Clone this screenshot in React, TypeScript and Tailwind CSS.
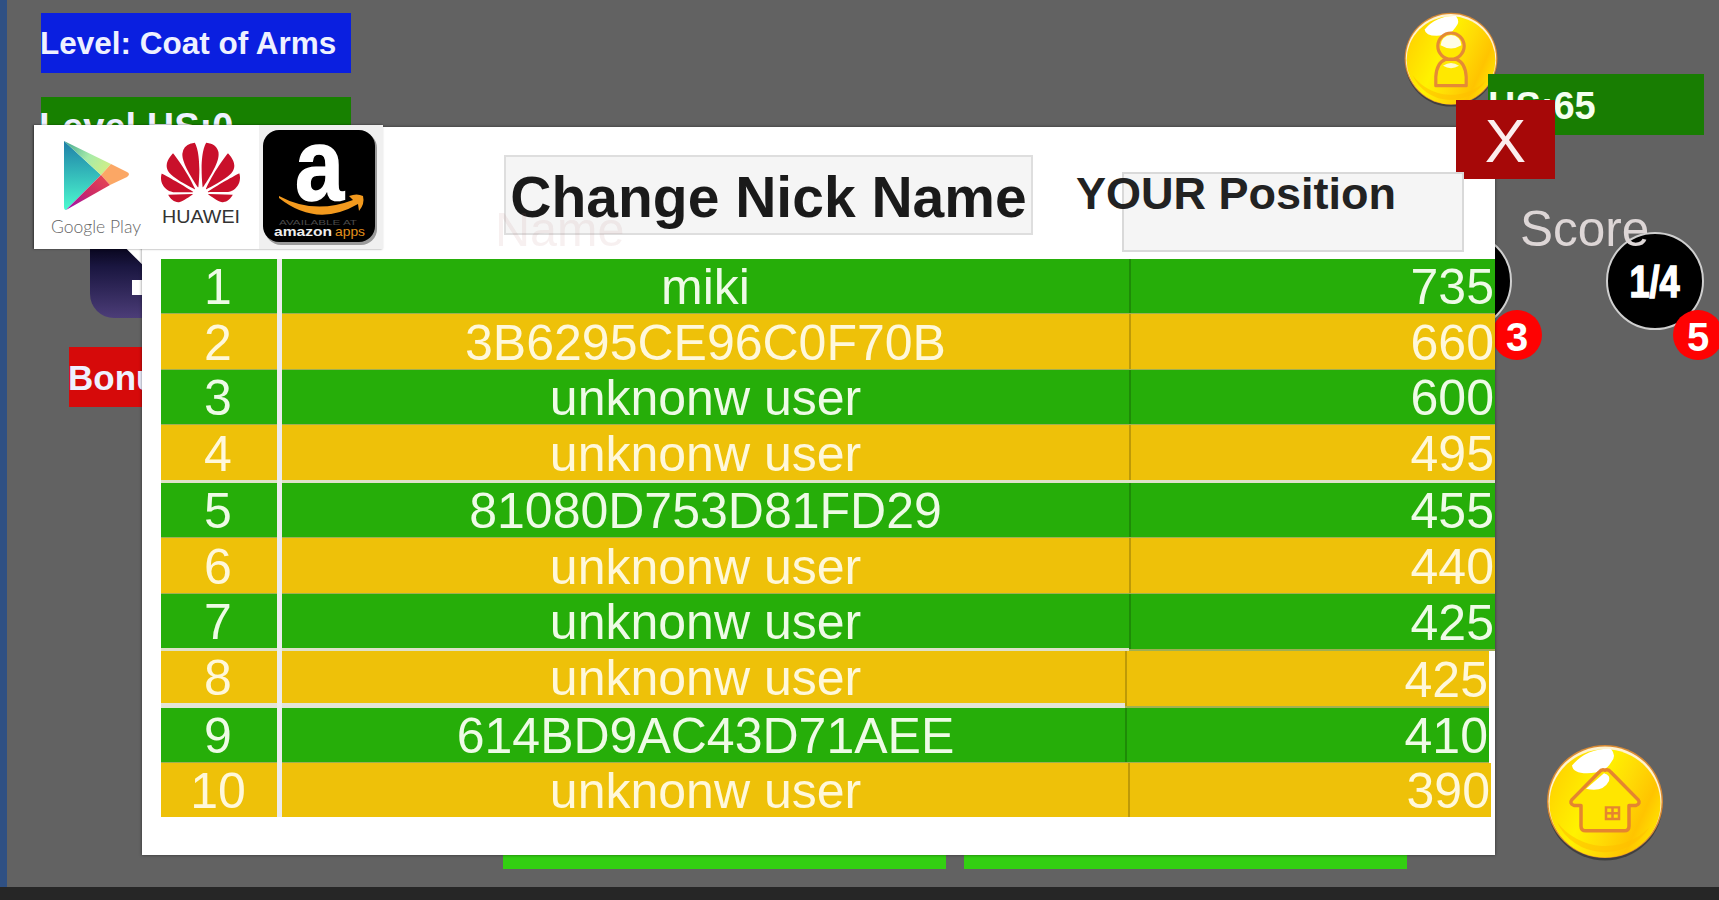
import type { ReactNode } from "react";
import { SiHuawei } from "react-icons/si";

type Row = {
  name: string;
  score: number;
  height: string;
  gap: string;
  scoreGap: string;
  inset: string;
};

const thin = "h-px bg-[#a0b052]";
const wide = "h-[3px] bg-[#dfe2c8]";
const full = "w-[366px]";

const rows: Row[] = [
  { name: "miki", score: 735, height: "h-[54px]", gap: thin, scoreGap: thin, inset: full },
  { name: "3B6295CE96C0F70B", score: 660, height: "h-[55px]", gap: thin, scoreGap: thin, inset: full },
  { name: "unknonw user", score: 600, height: "h-[54px]", gap: thin, scoreGap: thin, inset: full },
  { name: "unknonw user", score: 495, height: "h-[55px]", gap: wide, scoreGap: wide, inset: full },
  { name: "81080D753D81FD29", score: 455, height: "h-[54px]", gap: thin, scoreGap: thin, inset: full },
  { name: "unknonw user", score: 440, height: "h-[55px]", gap: thin, scoreGap: thin, inset: full },
  { name: "unknonw user", score: 425, height: "h-[54px]", gap: wide, scoreGap: "h-[2px] bg-[#a0b052]", inset: full },
  { name: "unknonw user", score: 425, height: "h-[52px]", gap: "h-[5px] bg-[#e3e4d8]", scoreGap: "h-[2px] bg-[#a0b052]", inset: "w-[364px] -ml-[4px] mr-[6px]" },
  { name: "614BD9AC43D71AEE", score: 410, height: "h-[54px]", gap: thin, scoreGap: thin, inset: "w-[364px] -ml-[4px] mr-[6px]" },
  { name: "unknonw user", score: 390, height: "h-[54px]", gap: "h-0", scoreGap: "h-0", inset: "w-[363px] -ml-px mr-[4px]" },
];

function LeaderRow({ row, rank }: { row: Row; rank: number }) {
  const bg = rank % 2 === 1 ? "bg-[#26ae09]" : "bg-[#eec109]";
  const ink = rank % 2 === 1 ? "text-[#eefbe6]" : "text-[#fff8da]";
  return (
    <div className={`flex text-[50px] leading-none whitespace-nowrap ${ink}`}>
      <div className="flex w-[116px] flex-col">
        <div className={`flex items-center justify-center pt-[2px] pr-[2px] ${row.height} ${bg}`}>{rank}</div>
        <div className={row.gap} />
      </div>
      <div className="w-[5px] bg-[#ececec]" />
      <div className="flex w-[847px] flex-col">
        <div className={`flex items-center justify-center pt-[2px] ${row.height} ${bg}`}>{row.name}</div>
        <div className={row.gap} />
      </div>
      <div className={`relative flex flex-col ${row.inset}`}>
        <div className={`flex flex-1 items-center justify-end border-l-2 border-black/20 pt-[2px] pr-px ${bg}`}>{row.score}</div>
        <div className={row.scoreGap} />
      </div>
    </div>
  );
}

function GooglePlay() {
  return (
    <svg viewBox="0 0 112 124" className="h-[124px] w-[112px]">
      <defs>
        <linearGradient id="gp-blue" x1="0" y1="0" x2="0" y2="1">
          <stop offset="0" stopColor="#1f7fa8" />
          <stop offset="0.5" stopColor="#35bdbb" />
          <stop offset="1" stopColor="#4dfad0" />
        </linearGradient>
        <linearGradient id="gp-green" x1="0" y1="0" x2="1" y2="0.5">
          <stop offset="0" stopColor="#3fa48f" />
          <stop offset="0.6" stopColor="#a6ebaa" />
          <stop offset="1" stopColor="#c9ee8c" />
        </linearGradient>
        <linearGradient id="gp-red" x1="0" y1="1" x2="1" y2="0">
          <stop offset="0" stopColor="#9b10b5" />
          <stop offset="0.5" stopColor="#cc2a66" />
          <stop offset="1" stopColor="#ea4a50" />
        </linearGradient>
      </defs>
      <path d="M30 16 L67 50 L32 85 Q30 85 30 82 Z" fill="url(#gp-blue)" />
      <path d="M30 16 L77 39 L67 50 Z" fill="url(#gp-green)" />
      <path d="M77 39 L93 47 Q97 49 93 52 L76 60 L67 50 Z" fill="#fba765" />
      <path d="M32 85 L67 50 L76 60 Z" fill="url(#gp-red)" />
      <text x="17" y="108" textLength="90" lengthAdjust="spacingAndGlyphs" fontSize="18" fill="#666" fontFamily="Lato, sans-serif" fontWeight="300">
        Google Play
      </text>
    </svg>
  );
}

function Huawei() {
  return (
    <div className="mr-[4px] flex w-[109px] flex-col items-center pt-[8px]">
      <SiHuawei className="h-[79px] w-[79px] text-[#c9102b]" />
      <svg viewBox="0 0 80 20" className="-mt-[6px] h-[20px] w-[80px]">
        <text x="1" y="17" textLength="78" lengthAdjust="spacingAndGlyphs" fontSize="19" fill="#333" fontFamily="Liberation Sans, sans-serif">
          HUAWEI
        </text>
      </svg>
    </div>
  );
}

function Amazon() {
  return (
    <svg viewBox="0 0 124 124" className="h-[124px] w-[124px] bg-[#f0f0f0]">
      <rect x="6" y="7" width="112" height="113" rx="16" fill="#9a9a9a" />
      <rect x="4" y="5" width="112" height="112" rx="16" fill="#000" />
      <text x="36" y="75" textLength="49" lengthAdjust="spacingAndGlyphs" fontSize="102" fontWeight="700" fill="#fff" stroke="#fff" strokeWidth="1.5" fontFamily="Liberation Sans, sans-serif">
        a
      </text>
      <path d="M20 71 Q55 90 94 75 L90 71 Q98 68 104 71 Q106 79 100 86 L99 79 Q58 103 20 73 Z" fill="#f39a1e" />
      <text x="20" y="100" textLength="78" lengthAdjust="spacingAndGlyphs" fontSize="7" fill="#4a4a4a" fontFamily="Liberation Sans, sans-serif">
        AVAILABLE AT
      </text>
      <text x="15" y="111" textLength="58" lengthAdjust="spacingAndGlyphs" fontSize="13" fontWeight="700" fill="#eee" fontFamily="Liberation Sans, sans-serif">
        amazon
      </text>
      <text x="76" y="111" textLength="30" lengthAdjust="spacingAndGlyphs" fontSize="13" fill="#e3901c" fontFamily="Liberation Sans, sans-serif">
        apps
      </text>
    </svg>
  );
}

function Coin({ id, className, children }: { id: string; className: string; children: ReactNode }) {
  return (
    <svg viewBox="0 0 120 120" preserveAspectRatio="none" className={className}>
      <defs>
        <linearGradient id={id} x1="0" y1="0.2" x2="1" y2="0.65">
          <stop offset="0" stopColor="#ffd000" />
          <stop offset="0.4" stopColor="#fff200" />
          <stop offset="0.62" stopColor="#ffdc05" />
          <stop offset="0.85" stopColor="#ffc400" />
          <stop offset="1" stopColor="#ffe000" />
        </linearGradient>
      </defs>
      <circle cx="60" cy="62" r="57.5" fill="#000" opacity="0.35" />
      <circle cx="60" cy="59" r="58" fill="#d98a33" />
      <circle cx="60" cy="59" r="56.5" fill="#fff3d0" />
      <circle cx="60" cy="61" r="55.5" fill={`url(#${id})`} />
      <path d="M12 80 A52 52 0 0 0 104 86 A60 60 0 0 1 12 80 Z" fill="#ffc000" opacity="0.6" />
      <path d="M27 22 Q42 4 66 5 Q72 12 66 19 Q60 30 42 30 Q28 30 27 22 Z" fill="#fff" />
      {children}
    </svg>
  );
}

export default function App() {
  return (
    <div
      className="relative flex h-[900px] w-[1719px] flex-col overflow-hidden bg-[#262626]"
      style={{ fontFamily: '"Liberation Sans", Arial, sans-serif' }}
    >
      <div className="flex h-[887px] border-l-[7px] border-[#2f5083] bg-[#626262] pl-[34px]">
        <div className="flex w-[310px] flex-col pt-[13px] font-bold whitespace-nowrap text-[#eef1ff]">
          <div className="flex h-[60px] items-center bg-[#0a1fe0] pt-[2px] text-[31.5px]">
            <span className="-ml-px">Level: Coat of Arms</span>
          </div>
          <div className="mt-[24px] flex h-[60px] items-center bg-[#178000] text-[38px]">
            <span className="-ml-[2px]">Level HS:0</span>
          </div>
          <div className="relative mt-[58px] ml-[49px] h-[103px] w-[103px] rounded-[24px] bg-linear-to-b from-black via-[#1a1640] to-[#4c3d78]">
            <div className="mt-[65px] ml-[42px] h-[15px] w-[20px] bg-white" />
            <div className="absolute top-[27px] left-[36px] h-[16px] w-[26px] rotate-45 bg-white" />
          </div>
          <div className="mt-[29px] ml-[28px] flex h-[60px] w-[180px] items-center bg-[#d60a0a] pt-[2px] text-[35px]">
            <span className="-ml-px">Bonus</span>
          </div>
        </div>
      </div>

      <Coin id="coin-person" className="absolute top-[12px] left-[1403px] h-[95px] w-[96px]">
        <path d="M41 93 V82 Q42 64 53 60 H67 Q78 64 79 82 V93 Z" fill="#ffe800" stroke="#e58a35" strokeWidth="4" strokeLinejoin="round" />
        <circle cx="60" cy="43" r="16.500" fill="#ffe800" stroke="#e58a35" strokeWidth="4" />
        <path d="M47 42 A13 13 0 0 1 73 42 Q60 50 47 42 Z" fill="#fff" opacity="0.9" />
        <path d="M50 68 Q60 61 70 68 Q60 74 50 68 Z" fill="#fff" opacity="0.8" />
      </Coin>
      <div className="absolute top-[74px] left-[1488px] flex h-[61px] w-[216px] items-center bg-[#187d02] pt-[3px] text-[38px] font-bold text-[#f4fff0]">
        HS:65
      </div>

      <div className="absolute top-[232px] left-[1414px] h-[98px] w-[98px] rounded-full border-2 border-[#cfcfcf] bg-black" />
      <div className="absolute top-[232px] left-[1606px] flex h-[98px] w-[98px] items-center justify-center rounded-full border-2 border-[#cfcfcf] bg-black pt-[2px] text-[44px] font-bold text-white">
        <span className="scale-x-[0.82] [-webkit-text-stroke:1.5px_white]">1/4</span>
      </div>
      <div className="absolute top-[310px] left-[1492px] flex size-[50px] items-center justify-center rounded-full bg-[#fe0202] pt-[3px] text-[40px] font-bold text-white">
        3
      </div>
      <div className="absolute top-[310px] left-[1673px] flex size-[50px] items-center justify-center rounded-full bg-[#fe0202] pt-[3px] text-[40px] font-bold text-white">
        5
      </div>

      <div className="absolute top-[845px] left-[503px] flex gap-[18px]">
        <div className="h-[24px] w-[443px] bg-[#33cf12]" />
        <div className="h-[24px] w-[443px] bg-[#33cf12]" />
      </div>

      <div className="absolute top-[127px] left-[142px] flex h-[728px] w-[1353px] flex-col bg-white pl-[19px] shadow-[0_0_3px_rgba(0,0,0,0.5)]">
        <div className="flex h-[132px] items-start pl-[343px]">
          <div className="mt-[28px] flex h-[80px] w-[529px] items-center justify-center border-2 border-[#dedede] bg-[#f5f5f5] pt-[4px] text-[57px] leading-none font-bold whitespace-nowrap text-[#1a1a1a]">
            Change Nick Name
          </div>
        </div>
        <div className="flex flex-col">
          {rows.map((row, i) => (
            <LeaderRow key={i} row={row} rank={i + 1} />
          ))}
        </div>
      </div>

      <div className="absolute top-[125px] left-[34px] flex h-[124px] w-[349px] bg-white shadow-[-1px_0_2px_rgba(0,0,0,0.5)]">
        <GooglePlay />
        <Huawei />
        <Amazon />
      </div>

      <div className="absolute top-[202px] left-[495px] text-[48.5px] leading-[54px] text-[#b06a6a]/10">Name</div>
      <div className="absolute top-[202px] left-[1520px] text-[49.5px] leading-[54px] text-[#ddd6d6]">Score</div>

      <div className="absolute top-[100px] left-[1456px] flex h-[79px] w-[99px] items-center justify-center bg-[#a60808] pt-[3px] text-[62px] leading-none text-[#fbeeee]">
        X
      </div>
      <div className="absolute top-[172px] left-[1122px] h-[80px] w-[342px] border-2 border-[#d9d9d9] bg-[#f5f5f5]" />
      <div className="absolute top-[168px] left-[1076px] text-[45px] leading-[52px] font-bold whitespace-nowrap text-[#222]">
        YOUR Position
      </div>

      <Coin id="coin-home" className="absolute top-[744px] left-[1545px] h-[117px] w-[120px]">
        <path d="M60 27 Q57 25 54 29 L27 57 Q24 61 29 63 L36 63 V84 Q36 89 41 89 H79 Q84 89 84 84 V63 L91 63 Q96 61 93 57 L66 29 Q63 25 60 27 Z" fill="#ffe600" stroke="#e5852f" strokeWidth="3.5" strokeLinejoin="round" />
        <path d="M41 46 L59 30 Q66 32 64 38 Q58 50 41 46 Z" fill="#fff" />
        <path d="M61 65 H74 V77 H61 Z M67.5 64 V78 M60 71 H75" fill="none" stroke="#e5852f" strokeWidth="2.5" />
      </Coin>
    </div>
  );
}
